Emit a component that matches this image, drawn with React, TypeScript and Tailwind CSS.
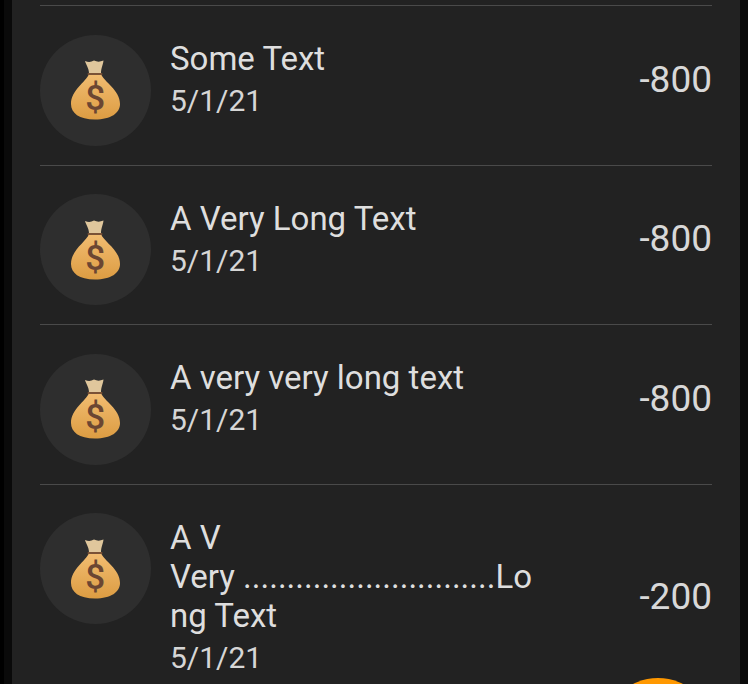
// Transaction list, dark theme, with the FAB just peeking in at the bottom edge.

type Transaction = {
  lines: string[];
  date: string;
  amount: string;
};

const transactions: Transaction[] = [
  { lines: ["Some Text"], date: "5/1/21", amount: "-800" },
  { lines: ["A Very Long Text"], date: "5/1/21", amount: "-800" },
  { lines: ["A very very long text"], date: "5/1/21", amount: "-800" },
  {
    lines: ["A V", "Very .............................Lo", "ng Text"],
    date: "5/1/21",
    amount: "-200",
  },
];

function MoneyBag() {
  return (
    <svg className="-translate-x-[1px]" width="50" height="62" viewBox="0 0 50 62" aria-hidden="true">
      <defs>
        <linearGradient id="bag" x1="0" y1="0" x2="0" y2="1">
          <stop offset="0" stopColor="#f2bd72" />
          <stop offset="1" stopColor="#dc9c42" />
        </linearGradient>
      </defs>
      {/* bag body */}
      <path
        d="M19 15 C16 23 1 31 1 45 C1 54 9 60.500 25 60.500 C41 60.500 50 54 50 45 C50 31 34 23 31 15 Z"
        fill="url(#bag)"
      />
      {/* tied top */}
      <path
        d="M15 2 C19 3.500 21 3 24 1.500 C27 3 30 3 33.500 1.500 C33 6 31 9 31 14.500 L19 14.500 C19 9 16 6 15 2 Z"
        fill="#e0c79c"
      />
      <rect x="17.500" y="14" width="15" height="2" rx="1" fill="#7a5236" />
      <text
        x="25.300"
        y="51"
        textAnchor="middle"
        fontFamily="Roboto, sans-serif"
        fontSize="35"
        fontWeight="500"
        fill="#6b4632"
      >
        $
      </text>
    </svg>
  );
}

function TransactionRow({ lines, date, amount }: Transaction) {
  return (
    <li className="flex items-start border-t border-[#4a4a4a] pt-[28.5px] pb-[19px]">
      <div className="flex h-[111px] w-[111px] shrink-0 items-center justify-center rounded-full bg-[#2e2e2e]">
        <MoneyBag />
      </div>
      <div className="flex flex-1 items-center justify-between pt-[4.5px] pl-[19px]">
        <div>
          <div className="text-[33px] leading-[39px] text-[#dedede]">
            {lines.map((line) => (
              <div key={line}>{line}</div>
            ))}
          </div>
          <div className="pt-[1px] text-[30px] leading-[43px] text-[#d6d6d6]">{date}</div>
        </div>
        <div className="pb-[2px] text-[37px] leading-[44px] text-[#d8d8d8]">{amount}</div>
      </div>
    </li>
  );
}

export default function App() {
  return (
    <div className="relative flex h-[684px] w-[748px] overflow-hidden bg-[#050505] font-['Roboto',sans-serif]">
      <div className="w-[4px] shrink-0 bg-[#000000]" />
      <div className="w-[8px] shrink-0 bg-[#0a0a0a]" />
      <main className="flex-1 bg-[#222222] pt-[5px] pr-[28px] pl-[28px]">
        <ul>
          {transactions.map((t, idx) => (
            <TransactionRow key={idx} {...t} />
          ))}
        </ul>
      </main>
      <div className="w-[8px] shrink-0 bg-[#0a0a0a]" />
      <div className="absolute top-[678px] left-[603px] h-[110px] w-[110px] rounded-full bg-[#ff9800]" />
    </div>
  );
}
